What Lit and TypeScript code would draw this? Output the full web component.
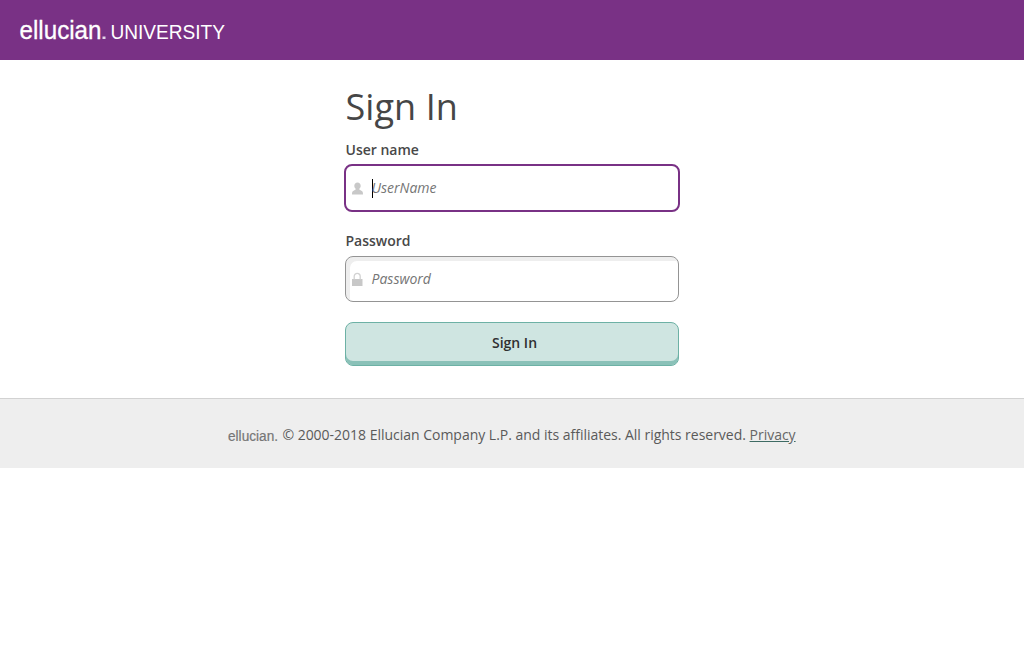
import { LitElement, html, css } from "lit";
import { customElement } from "lit/decorators.js";

@customElement("app-root")
export class AppRoot extends LitElement {
  static styles = css`
    :host {
      display: block;
      min-height: 663px;
      background: #fff;
      color: #414141;
      font-family: "Open Sans", sans-serif;
      font-size: 14px;
    }
    * {
      box-sizing: border-box;
    }
    .bar {
      height: 60px;
      background: #793185;
    }
    .brand {
      display: block;
      width: 240px;
      height: 60px;
      font-family: "Liberation Sans", Arial, sans-serif;
    }
    main {
      width: 334px;
      margin: 0 auto;
      padding-top: 20px;
      height: 338px;
    }
    h1 {
      margin: 0;
      padding-left: 0.5px;
      font-size: 36px;
      font-weight: 400;
      letter-spacing: 0.08px;
      line-height: 54px;
      height: 60px;
      color: #464646;
    }
    label {
      display: block;
      padding-left: 0.5px;
      font-weight: 600;
      height: 25px;
      line-height: 20px;
      color: #484848;
    }
    .field {
      display: flex;
      align-items: center;
      height: 46px;
      padding: 0 5.5px;
      margin-bottom: 20px;
      border: 1px solid #949494;
      border-radius: 8px;
      box-shadow: inset 4px 4px 0 #eee;
    }
    .field.focused {
      height: 48px;
      margin: -1px -1px 19px;
      border: 2px solid #793185;
      box-shadow: none;
    }
    .icon {
      width: 11px;
      height: 14px;
      flex: none;
      margin-right: 9px;
      fill: #c8c8c8;
    }
    .caret {
      width: 1px;
      height: 19px;
      margin-right: -1px;
      background: #000;
    }
    .hint {
      font-style: italic;
      color: #757575;
      line-height: 20px;
    }
    button {
      display: block;
      width: 100%;
      height: 44px;
      padding: 0 0 4px 5px;
      border: 1px solid #6db1a5;
      border-radius: 8px;
      background: #cfe5e1;
      box-shadow: inset 0 -4px 0 #8ac1b8;
      font: 600 14px "Open Sans", sans-serif;
      color: #303030;
    }
    footer {
      display: flex;
      justify-content: center;
      height: 70px;
      padding-top: 26px;
      border-top: 1px solid #d2d2d2;
      background: #eee;
      color: #5a5a5a;
      letter-spacing: -0.016px;
      line-height: 20px;
      white-space: pre;
    }
    .mark {
      width: 54px;
      height: 20px;
      font-family: "Liberation Sans", Arial, sans-serif;
      letter-spacing: 0;
    }
    a {
      color: #666;
      text-decoration: underline;
      text-decoration-color: #3e6b64;
    }
  `;

  render() {
    return html`
      <header class="bar">
        <svg class="brand" viewBox="0 0 240 60" fill="#fff">
          <text x="19.500" y="39" font-size="25" textLength="82" lengthAdjust="spacingAndGlyphs" stroke="#fff" stroke-width=".3">ellucian</text>
          <rect x="102.500" y="36.500" width="3" height="2.500" opacity=".8" />
          <text x="110.500" y="39" font-size="20" textLength="114.500" lengthAdjust="spacingAndGlyphs">UNIVERSITY</text>
        </svg>
      </header>
      <main>
        <h1>Sign In</h1>
        <label>User name</label>
        <div class="field focused">
          <svg class="icon" viewBox="0 0 11 14"><path d="M5.500 1.500C3.600 1.500 2.300 2.800 2.300 4.700c0 1.300.6 2.400 1.400 3.100v.8L1.600 9.700C.3 10.300 0 11 0 13.500h11c0-2.500-.3-3.200-1.600-3.800L7.300 8.600v-.8c.8-.7 1.400-1.800 1.400-3.100C8.700 2.800 7.400 1.500 5.500 1.500z" /></svg>
          <span class="caret"></span><span class="hint">UserName</span>
        </div>
        <label>Password</label>
        <div class="field">
          <svg class="icon" viewBox="0 0 11 14"><path d="M0 7h10.500v7H0z" /><path d="M2.200 7.500V4.300a3 3 0 0 1 6 0v3.200" fill="none" stroke="#d2d2d2" stroke-width="1.300" /></svg>
          <span class="hint">Password</span>
        </div>
        <button>Sign In</button>
      </main>
      <footer><svg class="mark" viewBox="0 0 54 20" fill="#767676"><text x="0" y="15.500" font-size="14" textLength="50" lengthAdjust="spacingAndGlyphs" stroke="#767676" stroke-width=".2">ellucian.</text></svg><span>© 2000-2018 Ellucian Company L.P. and its affiliates. All rights reserved. <a>Privacy</a></span></footer>
    `;
  }
}
